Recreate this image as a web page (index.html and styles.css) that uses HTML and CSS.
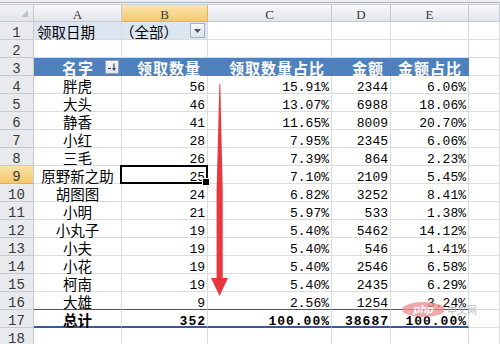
FILE: index.html
```html
<!DOCTYPE html>
<html lang="zh">
<head>
<meta charset="utf-8">
<title>数据透视表</title>
<link rel="stylesheet" href="styles.css">
</head>
<body>
<div class="sheet">
  <div class="topband"></div>
  <div class="grid">
    <div class="corner"></div>
    <div class="colh">A</div>
    <div class="colh sel">B</div>
    <div class="colh">C</div>
    <div class="colh">D</div>
    <div class="colh">E</div>
    <div class="colh"></div>

    <div class="rowh">1</div>
    <div class="c t l filt">领取日期</div>
    <div class="c t l filt"><span class="shift">（全部）</span><span class="ddbtn"><svg width="7" height="4" viewBox="0 0 7 4"><path d="M0 0H7L3.5 4Z" fill="#4a4f57"/></svg></span></div>
    <div class="c"></div><div class="c"></div><div class="c"></div><div class="c"></div>

    <div class="rowh">2</div>
    <div class="c"></div><div class="c"></div><div class="c"></div><div class="c"></div><div class="c"></div><div class="c"></div>

    <div class="rowh">3</div>
    <div class="c t hd ctr">名字<span class="sortbtn"><svg width="12" height="12" viewBox="0 0 12 12"><path d="M2 7.5H5" stroke="#3b4a60" stroke-width="1.2"/><path d="M8 2.5V9" stroke="#3b4a60" stroke-width="1.2"/><path d="M6 7L8 10L10 7Z" fill="#3b4a60"/></svg></span></div>
    <div class="c t hd">领取数量</div>
    <div class="c t hd">领取数量占比</div>
    <div class="c t hd">金额</div>
    <div class="c t hd">金额占比</div>
    <div class="c"></div>

    <div class="rowh">4</div>
    <div class="c t">胖虎</div><div class="c n">56</div><div class="c n">15.91%</div><div class="c n">2344</div><div class="c n">6.06%</div><div class="c"></div>
    <div class="rowh">5</div>
    <div class="c t">大头</div><div class="c n">46</div><div class="c n">13.07%</div><div class="c n">6988</div><div class="c n">18.06%</div><div class="c"></div>
    <div class="rowh">6</div>
    <div class="c t">静香</div><div class="c n">41</div><div class="c n">11.65%</div><div class="c n">8009</div><div class="c n">20.70%</div><div class="c"></div>
    <div class="rowh">7</div>
    <div class="c t">小红</div><div class="c n">28</div><div class="c n">7.95%</div><div class="c n">2345</div><div class="c n">6.06%</div><div class="c"></div>
    <div class="rowh">8</div>
    <div class="c t">三毛</div><div class="c n">26</div><div class="c n">7.39%</div><div class="c n">864</div><div class="c n">2.23%</div><div class="c"></div>
    <div class="rowh sel">9</div>
    <div class="c t">原野新之助</div><div class="c n active">25</div><div class="c n">7.10%</div><div class="c n">2109</div><div class="c n">5.45%</div><div class="c"></div>
    <div class="rowh">10</div>
    <div class="c t">胡图图</div><div class="c n">24</div><div class="c n">6.82%</div><div class="c n">3252</div><div class="c n">8.41%</div><div class="c"></div>
    <div class="rowh">11</div>
    <div class="c t">小明</div><div class="c n">21</div><div class="c n">5.97%</div><div class="c n">533</div><div class="c n">1.38%</div><div class="c"></div>
    <div class="rowh">12</div>
    <div class="c t">小丸子</div><div class="c n">19</div><div class="c n">5.40%</div><div class="c n">5462</div><div class="c n">14.12%</div><div class="c"></div>
    <div class="rowh">13</div>
    <div class="c t">小夫</div><div class="c n">19</div><div class="c n">5.40%</div><div class="c n">546</div><div class="c n">1.41%</div><div class="c"></div>
    <div class="rowh">14</div>
    <div class="c t">小花</div><div class="c n">19</div><div class="c n">5.40%</div><div class="c n">2546</div><div class="c n">6.58%</div><div class="c"></div>
    <div class="rowh">15</div>
    <div class="c t">柯南</div><div class="c n">19</div><div class="c n">5.40%</div><div class="c n">2435</div><div class="c n">6.29%</div><div class="c"></div>
    <div class="rowh">16</div>
    <div class="c t pre">大雄</div><div class="c n pre">9</div><div class="c n pre">2.56%</div><div class="c n pre">1254</div><div class="c n pre">3.24%</div><div class="c"></div>
    <div class="rowh">17</div>
    <div class="c t tot">总计</div><div class="c n tot">352</div><div class="c n tot">100.00%</div><div class="c n tot">38687</div><div class="c n tot">100.00%</div><div class="c"></div>
    <div class="rowh">18</div>
    <div class="c"></div><div class="c"></div><div class="c"></div><div class="c"></div><div class="c"></div><div class="c"></div>
  </div>

  <svg class="arrow" width="500" height="344" viewBox="0 0 500 344">
    <path d="M219.4 84L220.3 84L222.7 190L222.7 278L228 278L219.6 296L211 278L216.6 278L216.6 190Z" fill="#e8383d"/>
  </svg>

  <div class="wm"><span class="wm-logo">php</span><span class="wm-text">中文网</span></div>
</div>
</body>
</html>
```

FILE: styles.css
```css
* {
  box-sizing: border-box;
}

body {
  margin: 0;
  background: #ffffff;
  font-family: "Noto Sans CJK SC", sans-serif;
  color: #000;
}

.sheet {
  position: relative;
  width: 500px;
  height: 344px;
  overflow: hidden;
  background: #ffffff;
}

.topband {
  height: 5px;
  background: linear-gradient(#eceef1 0, #eceef1 2px, #aeb3ba 2px, #aeb3ba 3px, #f3f4f6 3px);
  border-bottom: 1px solid #c9cdd3;
}

.grid {
  display: grid;
  grid-template-columns: 34px 88px 86px 124px 59px 78px 31px;
  grid-template-rows: 17px;
  grid-auto-rows: 18px;
}

.corner {
  position: relative;
  background: linear-gradient(#f1f3f5, #e2e5ea);
  border-right: 1px solid #c5cad1;
  border-bottom: 1px solid #c5cad1;
}

.corner::after {
  content: "";
  position: absolute;
  right: 5px;
  bottom: 4px;
  width: 0;
  height: 0;
  border-left: 7px solid transparent;
  border-bottom: 7px solid #bfc4cb;
}

.colh {
  background: linear-gradient(#f8f9fb, #e2e6eb);
  border-right: 1px solid #c5cad1;
  border-bottom: 1px solid #c5cad1;
  font: 13px/13px "Liberation Serif", serif;
  padding-top: 3px;
  color: #3a3a3a;
  text-align: center;
}

.colh.sel {
  background: linear-gradient(#fbe5b4, #f4c96a);
  border-right-color: #d9b365;
  border-bottom-color: #d9b365;
}

.rowh {
  background: #e8eaee;
  border-right: 1px solid #c5cad1;
  border-bottom: 1px solid #c5cad1;
  font: 14px/11px "Liberation Mono", monospace;
  color: #3a3a3a;
  text-align: center;
  padding-top: 6px;
}

.rowh.sel {
  background: linear-gradient(#fbe2ad, #f5c867);
  border-bottom-color: #d9b365;
}

.c {
  position: relative;
  border-right: 1px solid #dadcdf;
  border-bottom: 1px solid #dadcdf;
  white-space: nowrap;
}

.t {
  font-size: 14.5px;
  line-height: 15px;
  padding-top: 2px;
  text-align: center;
}

.l {
  text-align: left;
  padding-left: 3px;
}

.shift {
  margin-left: -5px;
}

.filt {
  background: #dce6f1;
}

.n {
  font: 13px/11px "Liberation Mono", monospace;
  text-align: right;
  padding: 6px 2px 0 0;
}

.hd {
  background: #4f81bd;
  border-right-color: #4f81bd;
  border-bottom-color: #4f81bd;
  color: #ffffff;
  font-weight: bold;
  font-size: 15px;
  letter-spacing: 1px;
  text-align: right;
  padding-right: 6px;
}

.hd.ctr {
  text-align: center;
  padding-right: 0;
  padding-left: 1px;
}

.ddbtn {
  position: absolute;
  right: 2px;
  top: 1px;
  width: 15px;
  height: 15px;
  border: 1px solid #a9b2be;
  background: linear-gradient(#f7f9fb, #dde3ea);
  display: flex;
  align-items: center;
  justify-content: center;
}

.sortbtn {
  position: absolute;
  right: 2px;
  top: 2px;
  width: 14px;
  height: 14px;
  border: 1px solid #8ea3bd;
  background: linear-gradient(#f6f8fb, #dfe5ee);
  display: flex;
  align-items: center;
  justify-content: center;
}

.active::after {
  content: "";
  position: absolute;
  left: -2px;
  top: -1px;
  right: -1px;
  bottom: -1px;
  border: 2px solid #000;
}

.active::before {
  content: "";
  position: absolute;
  right: -3px;
  bottom: -3px;
  width: 6px;
  height: 6px;
  background: #000;
  border: 1px solid #fff;
  z-index: 2;
}

.pre {
  border-bottom-color: #3d5a8a;
}

.tot {
  font-weight: bold;
  border-bottom: 2px solid #3d5a8a;
}

.n.tot {
  letter-spacing: 1px;
  padding-right: 1px;
}

.arrow {
  position: absolute;
  left: 0;
  top: 0;
  pointer-events: none;
}

.wm {
  position: absolute;
  left: 402px;
  top: 302px;
  display: flex;
  align-items: center;
  gap: 2px;
  opacity: 0.75;
}

.wm-logo {
  width: 43px;
  height: 15px;
  border-radius: 50%;
  background: #ec8b90;
  color: #ffffff;
  font: italic bold 11px/15px "Liberation Sans", sans-serif;
  text-align: center;
}

.wm-text {
  font-size: 10px;
  line-height: 12px;
  color: #a9a9a9;
}
```
